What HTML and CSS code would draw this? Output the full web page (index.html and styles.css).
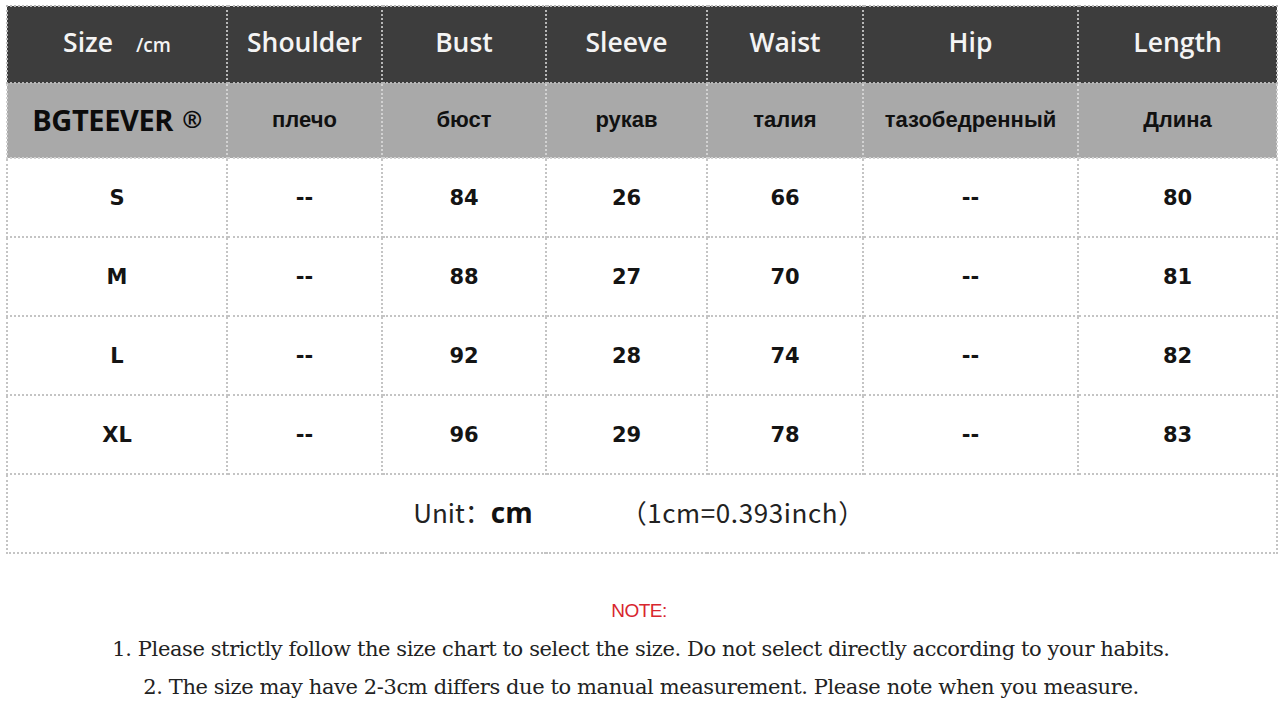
FILE: index.html
```html
<!DOCTYPE html>
<html>
<head>
<meta charset="utf-8">
<link rel="stylesheet" href="styles.css">
</head>
<body>
<table class="chart">
  <colgroup>
    <col class="c1"><col class="c2"><col class="c3"><col class="c4"><col class="c5"><col class="c6"><col class="c7">
  </colgroup>
  <tr class="head">
    <th>Size <span class="unit-small">/cm</span></th>
    <th>Shoulder</th><th>Bust</th><th>Sleeve</th><th>Waist</th><th>Hip</th><th>Length</th>
  </tr>
  <tr class="sub">
    <th class="brand">BGTEEVER <span class="reg">®</span></th>
    <th>плечо</th><th>бюст</th><th>рукав</th><th>талия</th><th>тазобедренный</th><th>Длина</th>
  </tr>
  <tr class="data r1"><td>S</td><td>--</td><td>84</td><td>26</td><td>66</td><td>--</td><td>80</td></tr>
  <tr class="data r2"><td>M</td><td>--</td><td>88</td><td>27</td><td>70</td><td>--</td><td>81</td></tr>
  <tr class="data r3"><td>L</td><td>--</td><td>92</td><td>28</td><td>74</td><td>--</td><td>82</td></tr>
  <tr class="data r4"><td>XL</td><td>--</td><td>96</td><td>29</td><td>78</td><td>--</td><td>83</td></tr>
  <tr class="unit-row">
    <td colspan="7"><span class="unit-label">Unit：</span><span class="unit-cm">cm</span><span class="unit-conv">（1cm=0.393inch）</span></td>
  </tr>
</table>
<div class="notes">
  <div class="note-title">NOTE:</div>
  <p class="note-line">1. Please strictly follow the size chart to select the size. Do not select directly according to your habits.</p>
  <p class="note-line">2. The size may have 2-3cm differs due to manual measurement. Please note when you measure.</p>
</div>
</body>
</html>
```
FILE: styles.css
```css
html, body {
  margin: 0;
  padding: 0;
  background: #ffffff;
}
body {
  padding: 5px 4px 0 6px;
}
.chart {
  width: 1270px;
  border-collapse: collapse;
  table-layout: fixed;
}
.c1 { width: 220px; }
.c2 { width: 155px; }
.c3 { width: 164px; }
.c4 { width: 161px; }
.c5 { width: 156px; }
.c6 { width: 215px; }
.c7 { width: 199px; }
.chart th, .chart td {
  border: 2px dotted #c4c4c4;
  text-align: center;
  padding: 0;
}
.head th {
  height: 69px;
  background: #3d3d3d;
  color: #f4f4f4;
  font-family: "Open Sans", "DejaVu Sans", sans-serif;
  font-weight: 600;
  font-size: 26.5px;
  padding-bottom: 6px;
  border-color: #b8b8b8;
}
.head .unit-small {
  font-size: 19px;
  margin-left: 16px;
}
.sub th {
  height: 71px;
  background: #a9a9a9;
  color: #111111;
  font-family: "Liberation Sans", Arial, sans-serif;
  font-weight: bold;
  font-size: 22px;
  border-color: #d2d2d2;
  padding-bottom: 2px;
}
.sub .brand {
  font-family: "Open Sans", "DejaVu Sans", sans-serif;
  font-weight: 700;
  font-size: 29px;
  letter-spacing: -0.4px;
  color: #0c0c0c;
}
.sub .reg {
  font-size: 24px;
  vertical-align: 3px;
  margin-left: 2px;
}
.data td {
  height: 77px;
  font-family: "DejaVu Sans", Verdana, sans-serif;
  font-weight: bold;
  font-size: 21px;
  color: #141414;
}
.unit-row td {
  height: 73px;
  font-family: "Noto Sans CJK SC", "Noto Sans", sans-serif;
  font-size: 26px;
  color: #222222;
  padding-bottom: 4px;
}
.unit-label {
  margin-left: -6px;
}
.unit-cm {
  font-family: "Open Sans", sans-serif;
  font-weight: 700;
  font-size: 28px;
  color: #111111;
}
.unit-conv {
  margin-left: 88px;
  letter-spacing: 0.6px;
}
.notes {
  text-align: center;
  margin-top: 46px;
  font-family: "DejaVu Serif", "Liberation Serif", serif;
}
.note-title {
  font-family: "Liberation Sans", Arial, sans-serif;
  color: #d8262e;
  font-size: 19px;
  line-height: 22px;
  margin-left: -4px;
  letter-spacing: -0.5px;
}
.note-line {
  margin: 0;
  font-size: 21px;
  color: #222222;
  line-height: 38px;
  letter-spacing: -0.4px;
}
.note-line:first-of-type {
  margin-top: 8px;
}
```
